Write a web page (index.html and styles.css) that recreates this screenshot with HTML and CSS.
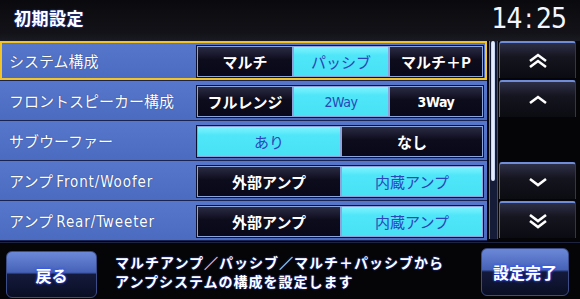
FILE: index.html
```html
<!DOCTYPE html>
<html lang="ja">
<head>
<meta charset="utf-8">
<link rel="stylesheet" href="styles.css">
</head>
<body>
<div class="screen">
  <header class="header">
    <div class="title">初期設定</div>
    <div class="clock">14<span class="colon">:</span>25</div>
  </header>
  <main class="main">
    <section class="list">
      <div class="row selected">
        <div class="label">システム構成</div>
        <div class="group">
          <div class="seg w96 dark">マルチ</div>
          <div class="seg w96 on">パッシブ</div>
          <div class="seg w94 dark">マルチ＋P</div>
        </div>
      </div>
      <div class="row">
        <div class="label">フロントスピーカー構成</div>
        <div class="group">
          <div class="seg w96 dark">フルレンジ</div>
          <div class="seg w96 on latin">2Way</div>
          <div class="seg w94 dark latin">3Way</div>
        </div>
      </div>
      <div class="row">
        <div class="label">サブウーファー</div>
        <div class="group">
          <div class="seg w144 on">あり</div>
          <div class="seg w142 dark">なし</div>
        </div>
      </div>
      <div class="row">
        <div class="label">アンプ <span class="latin">Front/Woofer</span></div>
        <div class="group">
          <div class="seg w144 dark">外部アンプ</div>
          <div class="seg w142 on">内蔵アンプ</div>
        </div>
      </div>
      <div class="row">
        <div class="label">アンプ <span class="latin">Rear/Tweeter</span></div>
        <div class="group">
          <div class="seg w144 dark">外部アンプ</div>
          <div class="seg w142 on">内蔵アンプ</div>
        </div>
      </div>
    </section>
    <div class="scroll"><div class="thumb"></div></div>
    <nav class="arrows">
      <div class="arrow">
        <svg width="20" height="16" viewBox="0 0 20 16"><path d="M2 8 L10 2 L18 8 M2 14 L10 8 L18 14" fill="none" stroke="#fff" stroke-width="2.6" stroke-linejoin="miter"/></svg>
      </div>
      <div class="arrow">
        <svg width="20" height="10" viewBox="0 0 20 10"><path d="M2 8 L10 2 L18 8" fill="none" stroke="#fff" stroke-width="2.6"/></svg>
      </div>
      <div class="arrow-gap"></div>
      <div class="arrow">
        <svg width="20" height="10" viewBox="0 0 20 10"><path d="M2 2 L10 8 L18 2" fill="none" stroke="#fff" stroke-width="2.6"/></svg>
      </div>
      <div class="arrow">
        <svg width="20" height="16" viewBox="0 0 20 16"><path d="M2 2 L10 8 L18 2 M2 8 L10 14 L18 8" fill="none" stroke="#fff" stroke-width="2.6"/></svg>
      </div>
    </nav>
  </main>
  <footer class="footer">
    <div class="btn back">戻る</div>
    <div class="help">マルチアンプ／パッシブ／マルチ＋パッシブから<br>アンプシステムの構成を設定します</div>
    <div class="btn done">設定完了</div>
  </footer>
</div>
</body>
</html>
```

FILE: styles.css
```css
* { box-sizing: border-box; }
html, body { margin: 0; padding: 0; background: #050507; }
body {
  width: 580px;
  height: 299px;
  overflow: hidden;
  font-family: "Noto Sans CJK JP", "Noto Sans", sans-serif;
  color: #fff;
}
.screen { width: 580px; height: 299px; display: flex; flex-direction: column; }

.header {
  height: 41px;
  display: flex;
  align-items: flex-start;
  justify-content: space-between;
  background: linear-gradient(#0a0a0e, #121218 80%, #1a1a22);
}
.title {
  margin: 5px 0 0 14px;
  font-size: 17px;
  font-weight: 700;
  letter-spacing: 0.5px;
  text-shadow: 0 0 2px #4060ff;
}
.clock {
  margin: 0 14px 0 0;
  font-family: "DejaVu Sans Condensed", "DejaVu Sans", sans-serif;
  font-size: 28px;
  line-height: 38px;
  letter-spacing: -1px;
  color: #f4f6ff;
}
.clock .colon { margin: 0 4px 0 3px; }

.main { height: 200px; display: flex; }
.list { width: 487px; display: flex; flex-direction: column; gap: 1px; background: #1b2450; }
.row {
  height: 39px;
  display: flex;
  align-items: flex-start;
  background: linear-gradient(#5677cc, #4a6bbf);
}
.row.selected { box-shadow: inset 0 0 0 2px #f2c428; }
.label {
  width: 197px;
  padding-left: 9px;
  font-size: 15px;
  line-height: 39px;
  white-space: nowrap;
  text-shadow: 0 0 1px #203070;
}
.latin { font-family: "DejaVu Sans Condensed", "DejaVu Sans", sans-serif; }
.label .latin { font-size: 15px; letter-spacing: 0.9px; }
.group {
  margin-top: 5px;
  display: flex;
  height: 31px;
  box-shadow: 0 0 0 1px #0c1230;
}
.seg {
  height: 31px;
  border: 1px solid #8ca4dc;
  display: flex;
  align-items: center;
  justify-content: center;
  font-size: 15px;
}
.seg.latin { font-size: 14px; letter-spacing: -0.4px; }
.w96 { width: 96px; }
.w94 { width: 94px; }
.w144 { width: 144px; }
.w142 { width: 142px; }
.seg.dark {
  background: linear-gradient(#2a2a44, #0d0c1c 45%, #09081a);
  font-weight: 700;
  color: #fff;
}
.seg.on {
  background: linear-gradient(#7ff2ff, #4ee6f8 30%, #48e0f4);
  color: #2a46b8;
  font-weight: 400;
}

.scroll {
  width: 9px;
  margin-left: 2px;
  background: #141c38;
  border-left: 1px solid #6078b8;
  border-right: 1px solid #3a4c88;
  position: relative;
  height: 198px;
}
.thumb {
  position: absolute;
  left: 1px;
  top: 0;
  width: 4px;
  height: 140px;
  border-radius: 2px;
  background: linear-gradient(90deg, #b8c8ee, #f4f8ff, #b8c8ee);
}

.arrows {
  margin-left: 1px;
  width: 77px;
  display: flex;
  flex-direction: column;
  gap: 2px;
  height: 197px;
}
.arrow {
  height: 37px;
  display: flex;
  align-items: center;
  justify-content: center;
  background: linear-gradient(#2e3048, #15151f 40%, #0b0b12);
  border-top: 2px solid #6f8dd8;
  border-left: 1px solid #4a64a8;
  border-right: 1px solid #2a3668;
  border-radius: 3px 3px 0 0;
}
.arrow-gap { flex: 1; }

.footer {
  flex: 1;
  display: flex;
  align-items: flex-start;
  border-top: 1px solid #1e2440;
  margin-top: 1px;
}
.btn {
  display: flex;
  align-items: center;
  justify-content: center;
  font-size: 16px;
  font-weight: 700;
  color: #fff;
  text-shadow: 0 0 2px #3050ff, 0 0 3px #3050ff;
  border: 1px solid #3c4c88;
  border-radius: 6px;
  background: linear-gradient(#6b88d8, #4562b8 45%, #141a3c 50%, #0a0e24);
}
.back { width: 91px; height: 47px; margin: 8px 0 0 6px; }
.done { width: 88px; height: 48px; margin: 5px 11px 0 auto; }
.help {
  margin: 10px 0 0 18px;
  font-size: 14px;
  line-height: 19px;
  font-weight: 700;
  letter-spacing: 1px;
  white-space: nowrap;
  text-shadow: 0 0 2px #3050ff;
}
```
